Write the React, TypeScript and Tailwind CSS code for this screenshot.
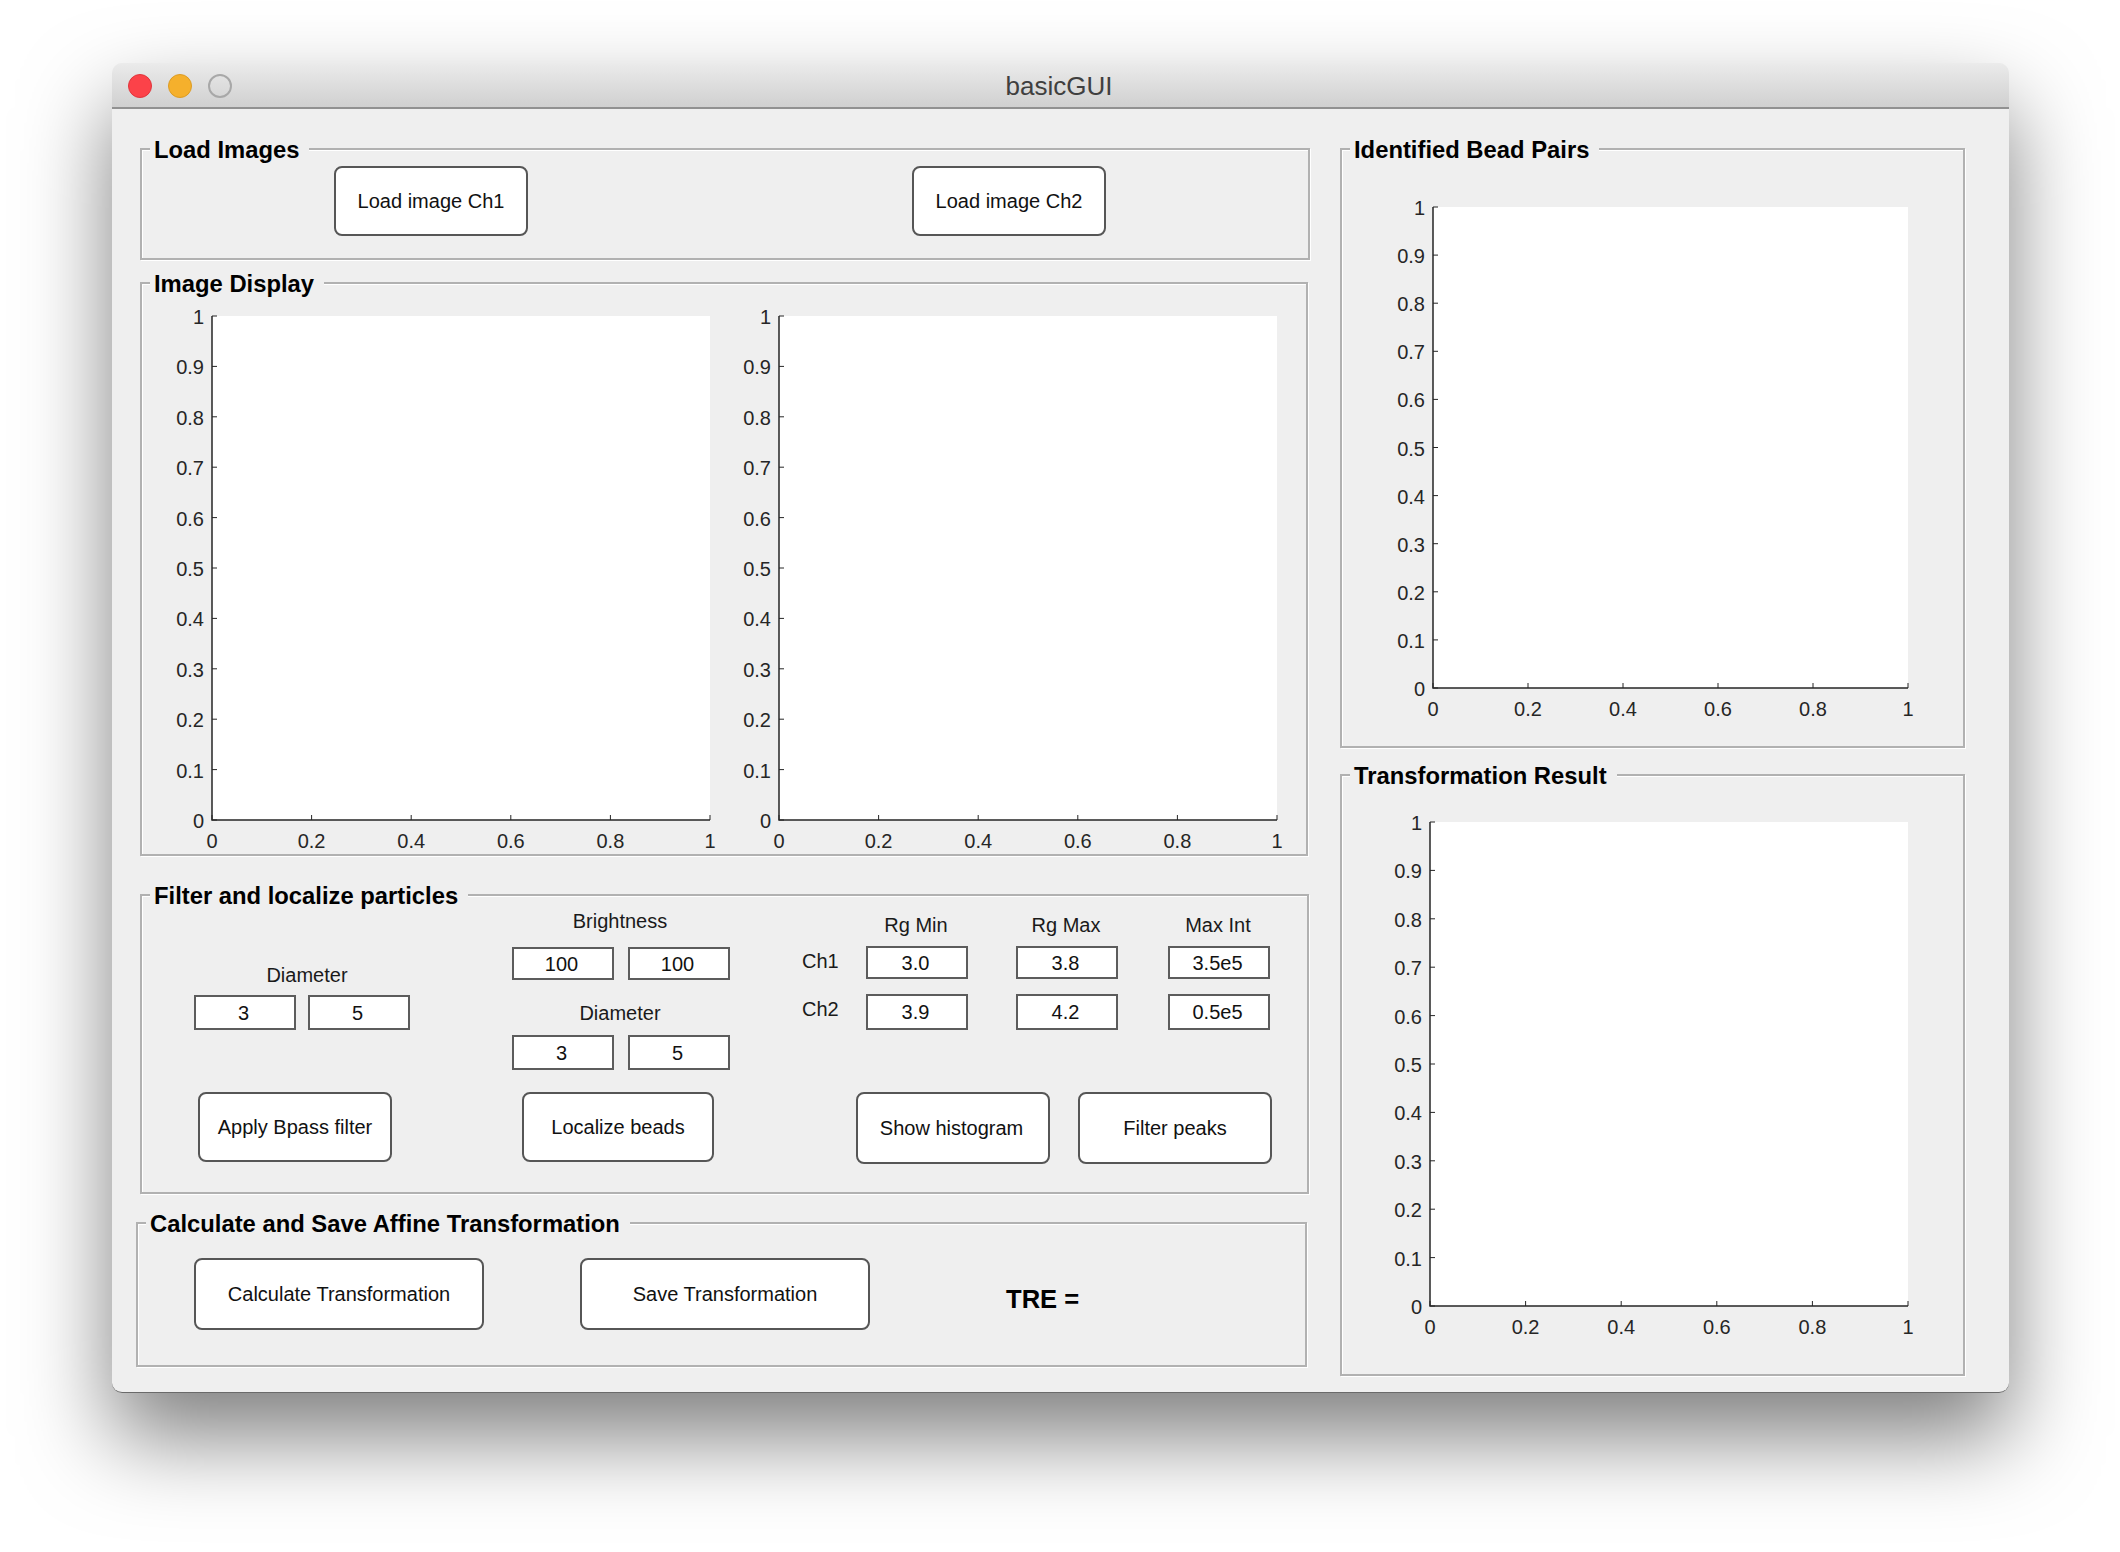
const BUTTON = 'flex items-center justify-center bg-white border-2 border-[#565656] rounded-[8px] text-[20px] text-[#111]';

function PushButton({ label, className }: { label: string; className: string }) {
  return <div className={`${BUTTON} ${className}`}>{label}</div>;
}

function EditBox({ value, className }: { value: string; className?: string }) {
  return (
    <div className={`flex items-center justify-center w-[102px] bg-white border-2 border-[#5c5c5c] pr-[3px] text-[20px] text-[#111] ${className ?? ''}`}>
      {value}
    </div>
  );
}

function Panel({ title, className, children }: { title: string; className: string; children?: React.ReactNode }) {
  return (
    <div className={`relative border-2 border-[#b1b1b1] shadow-[inset_1px_1px_0_#fff,1px_1px_0_#fff] ${className}`}>
      {/* title sits on top of the frame line, like a uipanel */}
      <div className="absolute left-[8px] -top-[14px] h-[28px] bg-[#efefef] pl-[4px] pr-[10px] text-[23.8px] leading-[28px] font-bold text-black whitespace-nowrap">
        {title}
      </div>
      {children}
    </div>
  );
}

const Y_TICKS = ['0', '0.1', '0.2', '0.3', '0.4', '0.5', '0.6', '0.7', '0.8', '0.9', '1'];
const X_TICKS = ['0', '0.2', '0.4', '0.6', '0.8', '1'];

// matlab style axes: white plot box, left and bottom rulers only
function Axes({ w, h, className }: { w: number; h: number; className?: string }) {
  const ox = 44;
  const oy = 12;
  const bottom = oy + h;
  return (
    <svg width={ox + w + 16} height={oy + h + 36} className={`block shrink-0 ${className ?? ''}`}>
      <rect x={ox} y={oy} width={w} height={h} fill="#fff" />
      <path d={`M${ox} ${oy}V${bottom}H${ox + w}`} fill="none" stroke="#262626" strokeWidth="1.5" />
      {Y_TICKS.map((t, i) => {
        const y = bottom - (h * i) / 10;
        return (
          <g key={t}>
            <line x1={ox} x2={ox + 5} y1={y} y2={y} stroke="#262626" strokeWidth="1" />
            <text x={ox - 8} y={y + 8} textAnchor="end" fontSize="20" fill="#262626">{t}</text>
          </g>
        );
      })}
      {X_TICKS.map((t, i) => {
        const x = ox + (w * i) / 5;
        return (
          <g key={t}>
            <line x1={x} x2={x} y1={bottom} y2={bottom - 5} stroke="#262626" strokeWidth="1" />
            <text x={x} y={bottom + 28} textAnchor="middle" fontSize="20" fill="#262626">{t}</text>
          </g>
        );
      })}
    </svg>
  );
}

const PEAK_COLS = [
  { head: 'Rg Min', a: '3.0', b: '3.9', ml: 'ml-0' },
  { head: 'Rg Max', a: '3.8', b: '4.2', ml: 'ml-[48px]' },
  { head: 'Max Int', a: '3.5e5', b: '0.5e5', ml: 'ml-[50px]' },
];

export default function App() {
  return (
    <div className="w-[2120px] h-[1552px] bg-white overflow-hidden pt-[63px] pl-[112px] font-['Liberation_Sans',Arial,sans-serif]">
      <div className="w-[1897px] h-[1330px] bg-[#efefef] rounded-[10px] overflow-visible shadow-[0_44px_88px_rgba(0,0,0,0.5)] border-b border-[#6a6a6a]">
        {/* title bar */}
        <div className="relative flex items-center justify-center h-[46px] pt-[2px] pr-[3px] rounded-t-[10px] bg-gradient-to-b from-[#ebebeb] to-[#d0d0d0] border-b-2 border-[#919191] text-[26px] text-[#3f3f3f]">
          <div className="absolute left-[16px] top-[11px] flex gap-[16px]">
            <div className="w-[24px] h-[24px] rounded-full bg-[#fc4249] border border-[#e0353c]" />
            <div className="w-[24px] h-[24px] rounded-full bg-[#f5b02c] border border-[#dc9c24]" />
            <div className="w-[24px] h-[24px] rounded-full border-2 border-[#a8a8a8]" />
          </div>
          basicGUI
        </div>

        <div className="flex pt-[39px] pl-[28px]">
          {/* left column */}
          <div className="flex flex-col w-[1170px]">
            <Panel title="Load Images" className="h-[112px] w-[1170px] flex items-start pt-[16px] pl-[192px]">
              <PushButton label="Load image Ch1" className="w-[194px] h-[70px]" />
              <PushButton label="Load image Ch2" className="w-[194px] h-[70px] ml-[384px]" />
            </Panel>

            <Panel title="Image Display" className="h-[574px] w-[1168px] mt-[22px] flex items-start pt-[20px] pl-[26px]">
              <Axes w={498} h={504} />
              <Axes w={498} h={504} className="ml-[9px]" />
            </Panel>

            <Panel title="Filter and localize particles" className="h-[300px] w-[1169px] mt-[38px] text-[20px] text-[#1a1a1a]">
              <div className="flex items-start h-[173px]">
                <div className="ml-[52px] mt-[67px] w-[216px]">
                  <div className="h-[24px] leading-[24px] text-center pl-[10px]">Diameter</div>
                  <div className="flex justify-between mt-[8px]">
                    <EditBox value="3" className="h-[35px]" />
                    <EditBox value="5" className="h-[35px]" />
                  </div>
                </div>

                <div className="ml-[102px] mt-[13px] w-[218px]">
                  <div className="h-[24px] leading-[24px] text-center pr-[2px]">Brightness</div>
                  <div className="flex justify-between mt-[14px]">
                    <EditBox value="100" className="h-[33px]" />
                    <EditBox value="100" className="h-[33px]" />
                  </div>
                  <div className="h-[24px] leading-[24px] text-center pr-[2px] mt-[21px]">Diameter</div>
                  <div className="flex justify-between mt-[10px]">
                    <EditBox value="3" className="h-[35px]" />
                    <EditBox value="5" className="h-[35px]" />
                  </div>
                </div>

                <div className="flex ml-[72px] mt-[17px]">
                  <div className="w-[64px] pt-[36px] leading-[24px]">
                    <div>Ch1</div>
                    <div className="mt-[24px]">Ch2</div>
                  </div>
                  {PEAK_COLS.map((col) => (
                    <div key={col.head} className={`w-[102px] ${col.ml}`}>
                      <div className="h-[24px] leading-[24px] text-center pr-[2px]">{col.head}</div>
                      <EditBox value={col.a} className="h-[33px] mt-[9px]" />
                      <EditBox value={col.b} className="h-[36px] mt-[15px]" />
                    </div>
                  ))}
                </div>
              </div>

              <div className="flex items-start mt-[23px] ml-[56px]">
                <PushButton label="Apply Bpass filter" className="w-[194px] h-[70px]" />
                <PushButton label="Localize beads" className="w-[192px] h-[70px] ml-[130px]" />
                <PushButton label="Show histogram" className="w-[194px] h-[72px] ml-[142px] pr-[3px]" />
                <PushButton label="Filter peaks" className="w-[194px] h-[72px] ml-[28px]" />
              </div>
            </Panel>

            <Panel title="Calculate and Save Affine Transformation" className="h-[145px] w-[1171px] -ml-[4px] mt-[28px] flex items-start pt-[34px] pl-[56px]">
              <PushButton label="Calculate Transformation" className="w-[290px] h-[72px]" />
              <PushButton label="Save Transformation" className="w-[290px] h-[72px] ml-[96px]" />
              <div className="ml-[136px] mt-[26px] text-[25.6px] leading-[30px] font-bold text-black">TRE =</div>
            </Panel>
          </div>

          {/* right column */}
          <div className="flex flex-col w-[625px] ml-[30px]">
            <Panel title="Identified Bead Pairs" className="h-[600px] pt-[45px] pl-[47px]">
              <Axes w={475} h={481} />
            </Panel>
            <Panel title="Transformation Result" className="h-[602px] mt-[26px] pt-[34px] pl-[44px]">
              <Axes w={478} h={484} />
            </Panel>
          </div>
        </div>
      </div>
    </div>
  );
}
